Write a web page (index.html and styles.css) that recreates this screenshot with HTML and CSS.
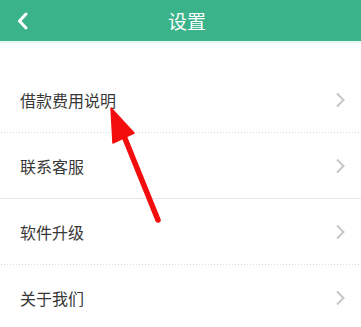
FILE: index.html
```html
<!DOCTYPE html>
<html lang="zh">
<head>
<meta charset="utf-8">
<link rel="stylesheet" href="styles.css">
</head>
<body>
<div class="page">
  <header class="bar">
    <svg class="back" width="12" height="18" viewBox="0 0 12 18"><path d="M9 2 L2.5 9 L9 16" fill="none" stroke="#fff" stroke-width="3" stroke-linecap="round" stroke-linejoin="round"/></svg>
    <div class="title">设置</div>
  </header>
  <div class="list">
    <div class="row dotted"><span>借款费用说明</span><svg class="chev" width="12" height="16" viewBox="0 0 12 16"><path d="M2 1.5 L8.5 8 L2 14.5" fill="none" stroke="#c6c6c6" stroke-width="2"/></svg></div>
    <div class="row solid"><span>联系客服</span><svg class="chev" width="12" height="16" viewBox="0 0 12 16"><path d="M2 1.5 L8.5 8 L2 14.5" fill="none" stroke="#c6c6c6" stroke-width="2"/></svg></div>
    <div class="row dotted"><span>软件升级</span><svg class="chev" width="12" height="16" viewBox="0 0 12 16"><path d="M2 1.5 L8.5 8 L2 14.5" fill="none" stroke="#c6c6c6" stroke-width="2"/></svg></div>
    <div class="row"><span>关于我们</span><svg class="chev" width="12" height="16" viewBox="0 0 12 16"><path d="M2 1.5 L8.5 8 L2 14.5" fill="none" stroke="#c6c6c6" stroke-width="2"/></svg></div>
  </div>
  <svg class="arrow" width="361" height="327" viewBox="0 0 361 327">
    <line x1="124" y1="136" x2="158" y2="220" stroke="#f30d0d" stroke-width="5.5" stroke-linecap="round"/>
    <polygon points="111,108 113,143 134,133" fill="#f30d0d" stroke="#f30d0d" stroke-width="1.5" stroke-linejoin="round"/>
  </svg>
</div>
</body>
</html>
```
FILE: styles.css
```css
html, body {
  margin: 0;
  padding: 0;
  background: #fff;
}
.page {
  position: relative;
  width: 361px;
  height: 327px;
  overflow: hidden;
  font-family: "Noto Sans CJK SC", "Noto Sans", sans-serif;
}
.bar {
  height: 41px;
  background: #3bb38a;
  border-bottom: 2px solid #e4f7f4;
  display: flex;
  align-items: center;
  padding-left: 17px;
}
.back {
  display: block;
  flex: none;
}
.title {
  flex: 1;
  text-align: center;
  color: #fff;
  font-size: 19px;
  margin-left: -16px;
}
.list {
  padding-top: 24px;
}
.row {
  height: 65px;
  display: flex;
  align-items: center;
  justify-content: space-between;
  padding: 0 14px 0 20px;
  font-size: 16px;
  color: #383838;
  position: relative;
}
.row span {
  line-height: 1;
}
.chev {
  display: block;
}
.dotted {
  border-bottom: 1px solid transparent;
  background-image: linear-gradient(to right, #d9d9d9 50%, transparent 50%);
  background-size: 3px 1px;
  background-repeat: repeat-x;
  background-position: 13px 100%;
  background-origin: border-box;
}
.solid {
  border-bottom: 1px solid #e6e6e6;
}
.arrow {
  position: absolute;
  left: 0;
  top: 0;
}
```
